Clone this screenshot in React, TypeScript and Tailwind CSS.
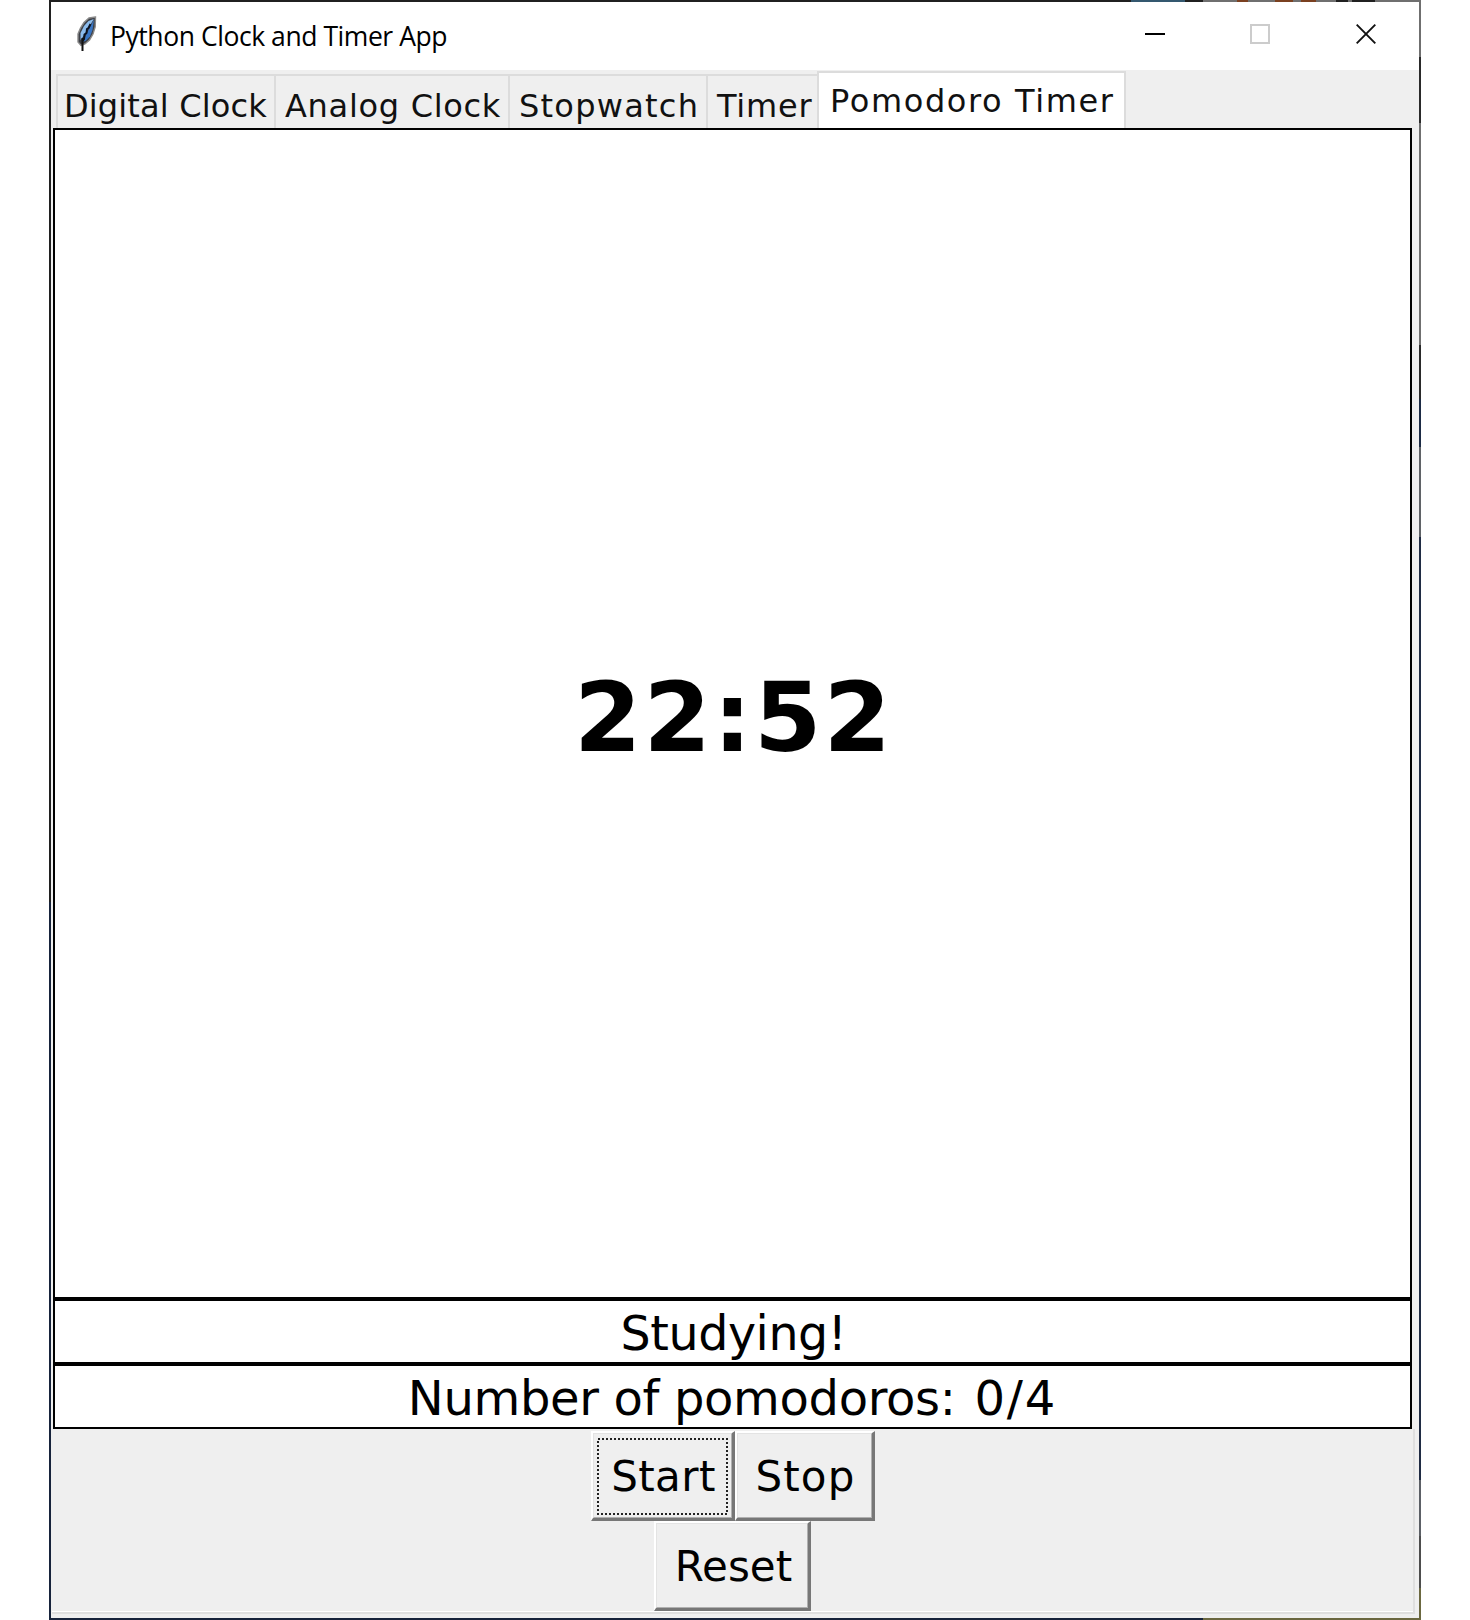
import React from "react";

const tabs = [
  { label: "Digital Clock", box: "w-[218px] pl-[6px]", text: "tracking-[0.15px]" },
  { label: "Analog Clock", box: "w-[234px] pl-[9px]", text: "tracking-[0.7px]" },
  { label: "Stopwatch", box: "w-[198px] pl-[9px]", text: "tracking-[1.25px]" },
  { label: "Timer", box: "w-[111px] pl-[9px]", text: "tracking-[0.8px]" },
];

const topStrip = [
  "w-[1082px] bg-[#202020]",
  "w-[54px] bg-[#34586f]",
  "w-[18px] bg-[#202020]",
  "w-[34px] bg-[#6f6f6f]",
  "w-[11px] bg-[#7a4020]",
  "w-[27px] bg-[#6f6f6f]",
  "w-[18px] bg-[#7a4020]",
  "w-[8px] bg-[#6f6f6f]",
  "w-[15px] bg-[#7a4020]",
  "w-[20px] bg-[#6f6f6f]",
  "w-[12px] bg-[#202020]",
  "w-[4px] bg-[#6f6f6f]",
  "w-[23px] bg-[#202020]",
  "grow bg-[#6f6f6f]",
];

const rightStrip = [
  "h-[55px] bg-[#6f6f6f]",
  "h-[66px] bg-[#292929]",
  "h-[222px] bg-[#6f6f6f]",
  "h-[54px] bg-[#292929]",
  "h-[48px] bg-[#1b2a44]",
  "h-[90px] bg-[#5f6266]",
  "h-[943px] bg-[#1f2b43]",
  "h-[56px] bg-[#5c6066]",
  "h-[52px] bg-[#4d4d4d]",
  "grow bg-[#6b6840]",
];

function Feather() {
  return (
    <svg className="block h-[36px] w-[22px]" viewBox="0 0 22 36">
      <path d="M19.5 1 L13 2 L8 6.5 L4.5 12 L2 18 L2 26 L5 29.5 L9 28 L13.5 24 L17 18 L19.2 11 Z" fill="#3c3f45" stroke="#8a8a8a" strokeWidth="1.4" />
      <path d="M17.8 3 L12.5 5 L8 10 L4.5 17 L4.5 24 L9 18 L13 11 Z" fill="#8dbcec" />
      <path d="M18 3.5 L14.5 10 L11 17 L7 26 L10 24.5 L14 20.5 L16.5 14 Z" fill="#3976c4" />
      <path d="M14.5 8 L12.5 12 L11 13 L10.5 17 L8.5 18.5 L8 23 L6.5 25" fill="none" stroke="#0b1220" strokeWidth="2" />
      <path d="M6.5 22 L6.5 35" stroke="#111" strokeWidth="2" />
    </svg>
  );
}

function TkButton({ label, box, text, focused = false }: { label: string; box: string; text: string; focused?: boolean }) {
  return (
    <button className={`relative shrink-0 border-t-2 border-r-[3px] border-b-[3px] border-l-2 border-t-white border-r-[#777] border-b-[#777] border-l-white bg-[#efefef] ${box}`}>
      <span className="flex h-full w-full items-center justify-center border border-t-[#e3e3e3] border-r-[#b0b0b0] border-b-[#b0b0b0] border-l-[#e3e3e3] pt-[3px] pl-[3px]">
        <span className={`whitespace-nowrap text-[42px] leading-none ${text}`}>{label}</span>
      </span>
      {focused && (
        <svg className="absolute top-[5px] left-[4px] h-[78px] w-[132px]">
          <rect x="1" y="1" width="129" height="75" fill="none" stroke="#222" strokeWidth="2" strokeDasharray="2 2" />
        </svg>
      )}
    </button>
  );
}

export default function App() {
  return (
    <div className="flex h-[1620px] w-[1470px] justify-start overflow-hidden bg-white pl-[49px] font-['DejaVu_Sans',sans-serif] text-black">
      <div className="flex h-full w-[1372px] flex-col">
        <div className="flex h-[2px] shrink-0">
          {topStrip.map((c, i) => (
            <div key={i} className={c} />
          ))}
        </div>
        <div className="flex h-[1616px] shrink-0">
          <div className="flex w-[2px] flex-col">
            <div className="h-[900px] bg-[#202020]" />
            <div className="grow bg-[#17233b]" />
          </div>
          <div className="flex w-[1368px] flex-col bg-[#efefef]">
            <header className="flex h-[68px] shrink-0 items-start justify-between bg-white">
              <div className="flex pl-[25px]">
                <div className="pt-[14px]">
                  <Feather />
                </div>
                <h1 className="ml-[12px] pt-[16px] font-['Open_Sans',sans-serif] text-[26.5px] leading-[36px] font-normal tracking-[-0.44px] whitespace-nowrap">
                  Python Clock and Timer App
                </h1>
              </div>
              <div className="flex pt-[22px] pr-[43px]">
                <div className="mt-[9px] mr-[85px] h-[2px] w-[20px] bg-black" />
                <div className="mr-[86px] h-[20px] w-[20px] border-2 border-[#cccccc]" />
                <svg className="h-[20px] w-[20px]" viewBox="0 0 20 20">
                  <path d="M0.7 0.7 L19.3 19.3 M19.3 0.7 L0.7 19.3" stroke="#111" strokeWidth="1.9" />
                </svg>
              </div>
            </header>
            <nav className="flex h-[58px] shrink-0 items-end pl-[5px] text-[32px] leading-[38px]">
              {tabs.map((t) => (
                <div key={t.label} className={`h-[54px] shrink-0 border-t-2 border-l-2 border-[#dcdcdc] pt-[11px] whitespace-nowrap text-[#111] ${t.box}`}>
                  <span className={t.text}>{t.label}</span>
                </div>
              ))}
              <div className="h-[57px] w-[309px] shrink-0 border-2 border-b-0 border-[#dcdcdc] bg-white pt-[9px] pl-[11px] whitespace-nowrap text-[#111]">
                <span className="tracking-[1.6px]">Pomodoro Timer</span>
              </div>
            </nav>
            <div className="flex">
              <div className="ml-[2px] flex w-[1359px] shrink-0 flex-col border-2 border-black bg-white">
                <div className="flex h-[1167px] items-center justify-center pt-[8px] pl-[2px] text-[97px] leading-none font-bold tracking-[2px]">
                  22:52
                </div>
                <div className="flex h-[65px] items-center justify-center border-t-4 border-black pt-[5px] pl-[2px] text-[47.5px] leading-none tracking-[-0.4px]">
                  Studying!
                </div>
                <div className="flex h-[65px] items-center justify-center border-t-4 border-black pt-[3px] text-[48px] leading-none tracking-[-0.35px] whitespace-nowrap">
                  <span>Number of pomodoros:</span>
                  <span className="ml-[19px] tracking-[1.8px]">0/4</span>
                </div>
              </div>
            </div>
            <div className="ml-[1px] flex h-[185px] w-[1363px] shrink-0 flex-col items-center border-r-2 border-b-2 border-r-[#dfdfdf] border-b-[#dfdfdf] pt-[2px]">
              <div className="flex">
                <TkButton label="Start" box="h-[90px] w-[144px]" text="tracking-[0.4px]" focused />
                <TkButton label="Stop" box="h-[90px] w-[140px]" text="tracking-[1.1px]" />
              </div>
              <TkButton label="Reset" box="h-[90px] w-[157px]" text="tracking-[0px]" />
              <div className="mt-auto h-[2px] w-full bg-white" />
            </div>
          </div>
          <div className="flex w-[2px] flex-col">
            {rightStrip.map((c, i) => (
              <div key={i} className={c} />
            ))}
          </div>
        </div>
        <div className="flex h-[2px] shrink-0">
          <div className="w-[1154px] bg-[#17233b]" />
          <div className="grow bg-[#6b6840]" />
        </div>
      </div>
    </div>
  );
}
